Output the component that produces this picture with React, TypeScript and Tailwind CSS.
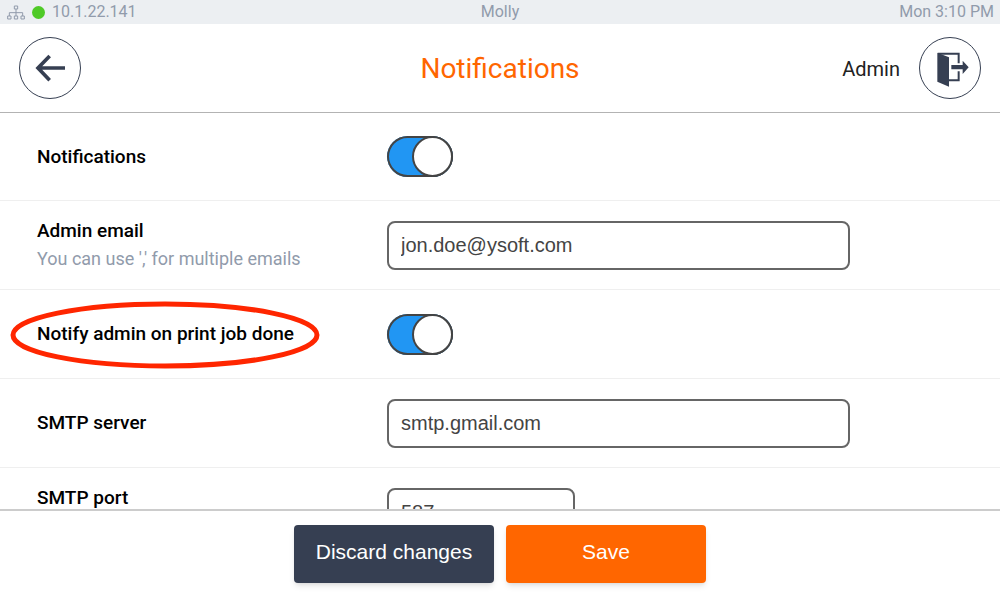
import { ReactNode, useState } from 'react';

function NetworkIcon() {
  return (
    <svg
      viewBox="22 9 54 45"
      className="h-[15px] w-[18px]"
      fill="none"
      stroke="currentColor"
      strokeWidth="3"
      aria-hidden="true"
    >
      <path d="M44 12h10v9h-10zM24 42h10v9h-10zM44 42h10v9h-10zM64 42h10v9h-10zM49 21v21M29 42v-10h40v10" />
    </svg>
  );
}

function BackIcon() {
  return (
    <svg
      viewBox="105 158 90 90"
      className="size-[30px]"
      fill="none"
      stroke="currentColor"
      strokeWidth="11"
      aria-hidden="true"
    >
      <path d="M195 203h-82M149 167l-35 36l35 37" />
    </svg>
  );
}

function LogoutIcon() {
  return (
    <svg
      viewBox="333 147 114 114"
      className="size-[38px]"
      aria-hidden="true"
    >
      <path
        fill="currentColor"
        d="M352 158l35 14v88l-35-15zM394 195h34v-13l18 20l-18 20v-14h-34z"
      />
      <path
        fill="none"
        stroke="currentColor"
        strokeWidth="6"
        d="M354 161h62v29M416 214v27h-29"
      />
    </svg>
  );
}

function SettingRow({
  id,
  label,
  hint,
  alignTop,
  highlighted,
  children,
}: {
  id: string;
  label: string;
  hint?: string;
  alignTop?: boolean;
  highlighted?: boolean;
  children: ReactNode;
}) {
  return (
    <div
      className={`flex min-h-[89px] shrink-0 border-b border-[#efefef] pr-6 pl-[37px] first:min-h-[88px] ${
        alignTop ? 'items-start pt-5' : 'items-center'
      }`}
    >
      <div className="w-[35%] shrink-0 min-[1000px]:w-[350px]">
        <label
          htmlFor={id}
          className="relative block w-fit text-[19px] leading-5 font-medium text-black"
        >
          {label}
          {highlighted && (
            <svg
              viewBox="0 0 310 68"
              className="pointer-events-none absolute -top-[23px] -left-[27px] h-[68px] w-[310px]"
              aria-hidden="true"
            >
              <ellipse
                cx="155"
                cy="34"
                rx="152"
                ry="31"
                fill="none"
                stroke="#ff2600"
                strokeWidth="5"
              />
            </svg>
          )}
        </label>
        {hint && (
          <p className="mt-2 text-[18px] leading-5 text-[#919bab]">{hint}</p>
        )}
      </div>
      {children}
    </div>
  );
}

function Toggle({ id }: { id: string }) {
  const [checked, setChecked] = useState(true);

  return (
    <input
      id={id}
      type="checkbox"
      role="switch"
      checked={checked}
      onChange={() => setChecked(!checked)}
      className="flex h-[41px] w-[66px] cursor-pointer appearance-none rounded-full bg-gray-300 shadow-[inset_0_0_0_2px_#444] before:block before:size-[41px] before:rounded-full before:border-2 before:border-[#444] before:bg-white checked:justify-end checked:bg-[#2196f3]"
    />
  );
}

function TextField({
  id,
  initialValue,
  short,
}: {
  id: string;
  initialValue: string;
  short?: boolean;
}) {
  const [value, setValue] = useState(initialValue);

  return (
    <input
      id={id}
      type="text"
      value={value}
      onChange={(e) => setValue(e.target.value)}
      className={`h-[49px] w-full min-w-0 rounded-lg border-2 border-[#666] bg-white px-3 font-['Liberation_Sans',Arial,sans-serif] text-[20px] text-[#444] ${
        short ? 'max-w-[188px]' : 'max-w-[463px]'
      }`}
    />
  );
}

export default function App() {
  return (
    <div className="flex h-screen flex-col bg-white font-[Roboto,sans-serif]">
      <div className="grid h-6 shrink-0 grid-cols-3 items-center bg-[#eceff2] px-[6px] text-[16px] leading-6 text-[#919bab]">
        <div className="flex items-center gap-[7px] pl-px">
          <NetworkIcon />
          <span className="size-[13px] rounded-full bg-[#4fca27]" />
          <span>10.1.22.141</span>
        </div>
        <div className="text-center">Molly</div>
        <div className="text-right">Mon 3:10 PM</div>
      </div>

      <header className="grid h-[89px] shrink-0 grid-cols-3 items-center border-b border-[#b3b3b3] px-[19px] text-[#363f52]">
        <button
          type="button"
          aria-label="Back"
          className="flex size-[62px] items-center justify-center rounded-full border border-[#363f52]"
        >
          <BackIcon />
        </button>
        <h1 className="pt-0.5 text-center text-[28px] leading-8 text-[#ff6600]">
          Notifications
        </h1>
        <div className="flex items-center justify-end gap-[19px]">
          <span className="pt-0.5 text-[20px] text-[#222]">Admin</span>
          <button
            type="button"
            aria-label="Log out"
            className="flex size-[62px] items-center justify-center rounded-full border border-[#363f52]"
          >
            <LogoutIcon />
          </button>
        </div>
      </header>

      <main className="flex min-h-0 flex-1 flex-col overflow-hidden">
        <SettingRow id="notifications" label="Notifications">
          <Toggle id="notifications" />
        </SettingRow>
        <SettingRow
          id="admin-email"
          label="Admin email"
          hint="You can use ',' for multiple emails"
        >
          <TextField id="admin-email" initialValue="jon.doe@ysoft.com" />
        </SettingRow>
        <SettingRow
          id="notify-admin"
          label="Notify admin on print job done"
          highlighted
        >
          <Toggle id="notify-admin" />
        </SettingRow>
        <SettingRow id="smtp-server" label="SMTP server">
          <TextField id="smtp-server" initialValue="smtp.gmail.com" />
        </SettingRow>
        <SettingRow id="smtp-port" label="SMTP port" alignTop>
          <TextField id="smtp-port" initialValue="587" short />
        </SettingRow>
      </main>

      <footer className="flex h-[88px] shrink-0 items-center justify-center gap-3 border-t-2 border-[#ccc] font-['Liberation_Sans',Arial,sans-serif] text-[21px] text-white">
        <button
          type="button"
          className="h-[58px] w-[200px] rounded bg-[#363f52] pb-1 shadow-md"
        >
          Discard changes
        </button>
        <button
          type="button"
          className="h-[58px] w-[200px] rounded bg-[#ff6600] pb-1 shadow-md"
        >
          Save
        </button>
      </footer>
    </div>
  );
}
